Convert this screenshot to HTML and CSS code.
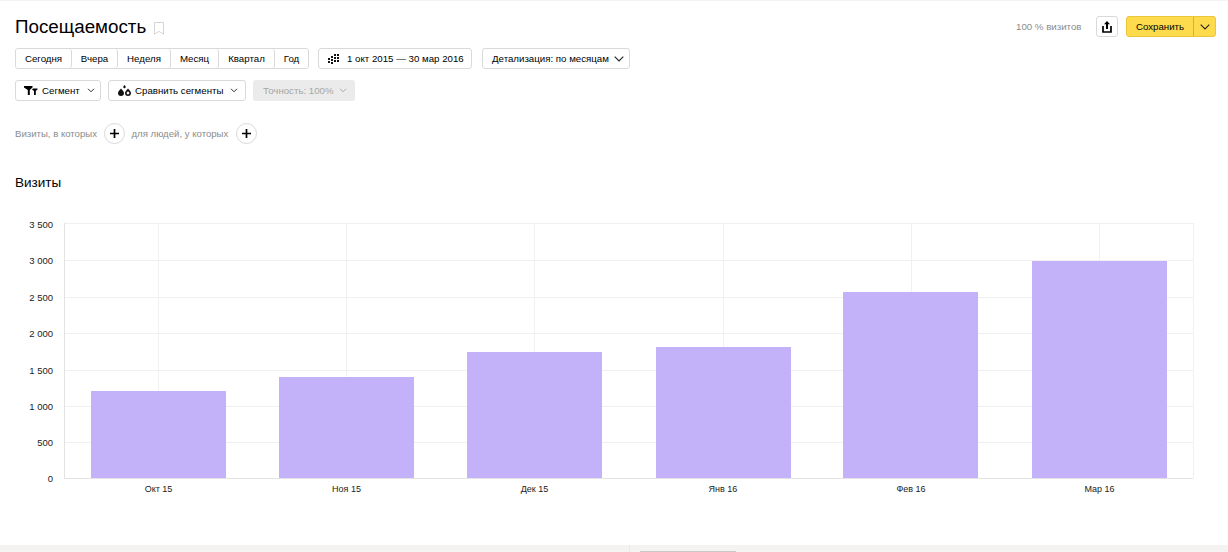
FILE: index.html
```html
<!DOCTYPE html>
<html lang="ru">
<head>
<meta charset="utf-8">
<title>Посещаемость</title>
<link rel="stylesheet" href="styles.css">
</head>
<body>
<div class="page">
  <header class="head">
    <div class="title-wrap">
      <h1 class="title">Посещаемость</h1>
      <svg class="bookmark" width="10" height="13" viewBox="0 0 10 13"><path d="M.5.500h9v11.600L5 9.400.5 12.100z" fill="none" stroke="#d4d4d4"/></svg>
    </div>
    <div class="head-right">
      <span class="sample">100 % визитов</span>
      <button class="btn share" aria-label="Поделиться">
        <svg width="10" height="12" viewBox="0 0 10 12"><path d="M5 0 2 3.200h2v4.800h2V3.200h2z" fill="#000"/><path d="M1 5v6h8V5" fill="none" stroke="#000" stroke-width="1.700"/></svg>
      </button>
      <div class="save">
        <span class="save-main">Сохранить</span>
        <span class="save-arrow"><svg width="10" height="6" viewBox="0 0 10 6"><path d="M.7.700 5 5 9.300.7" fill="none" stroke="#222" stroke-width="1.100"/></svg></span>
      </div>
    </div>
  </header>

  <div class="row row-dates">
    <div class="group">
      <button class="seg seg-1">Сегодня</button>
      <button class="seg seg-2">Вчера</button>
      <button class="seg seg-3">Неделя</button>
      <button class="seg seg-4">Месяц</button>
      <button class="seg seg-5">Квартал</button>
      <button class="seg seg-6">Год</button>
    </div>
    <button class="btn date">
      <svg width="12" height="10" viewBox="0 0 12 10" fill="#111"><path d="M0 4h2v2H0zM0 7h2v2H0zM3 2h2v2H3zM3 5h2v2H3zM3 8h2v2H3zM6 0h2v2H6zM6 3h2v2H6zM6 6h2v2H6zM9 0h2v2H9zM9 3h2v2H9zM9 6h2v2H9z"/></svg>
      <span>1 окт 2015 — 30 мар 2016</span>
    </button>
    <button class="btn detail">
      <span>Детализация: по месяцам</span>
      <svg width="10" height="6" viewBox="0 0 10 6"><path d="M.7.700 5 5 9.300.7" fill="none" stroke="#222" stroke-width="1.100"/></svg>
    </button>
  </div>

  <div class="row row-segments">
    <button class="btn segment">
      <svg width="14" height="9" viewBox="0 0 14 9" fill="#000"><path d="M0 0h8.500v1.500L5.800 4v5H3.800V4L0 1.500zM9 2.500h4.500v1L11.800 5v4H10V5L8 3.500z"/></svg>
      <span>Сегмент</span>
      <svg class="chev" width="8" height="5" viewBox="0 0 8 5"><path d="M1 .800 4 3.800 7 .8" fill="none" stroke="#333"/></svg>
    </button>
    <button class="btn compare">
      <svg width="13" height="11" viewBox="0 0 13 11" fill="#111"><path d="M3 3.500c1.300 1.600 3 3 3 4.500a3 3 0 0 1-6 0c0-1.500 1.700-2.900 3-4.500z"/><path fill-rule="evenodd" d="M10 3.500c1.300 1.600 3 3 3 4.500a3 3 0 0 1-6 0c0-1.500 1.700-2.900 3-4.500zM10 6.200C9.300 7 8.600 7.400 8.600 8.100a1.400 1.400 0 0 0 2.800 0c0-.7-.7-1.100-1.400-1.900z"/><path d="M6.500 0c.6.800 1.200 1.300 1.200 2a1.200 1.200 0 0 1-2.400 0c0-.7.600-1.200 1.200-2z"/></svg>
      <span>Сравнить сегменты</span>
      <svg class="chev" width="8" height="5" viewBox="0 0 8 5"><path d="M1 .800 4 3.800 7 .8" fill="none" stroke="#333"/></svg>
    </button>
    <button class="accuracy">
      <span>Точность: 100%</span>
      <svg class="chev-muted" width="8" height="5" viewBox="0 0 8 5"><path d="M1 .800 4 3.800 7 .8" fill="none" stroke="#aaa"/></svg>
    </button>
  </div>

  <div class="row row-filter">
    <span class="hint">Визиты, в которых</span>
    <button class="plus" aria-label="Добавить"><svg width="9" height="9" viewBox="0 0 9 9"><path d="M4.500 0v9M0 4.500h9" stroke="#000" stroke-width="1.700"/></svg></button>
    <span class="hint">для людей, у которых</span>
    <button class="plus" aria-label="Добавить"><svg width="9" height="9" viewBox="0 0 9 9"><path d="M4.500 0v9M0 4.500h9" stroke="#000" stroke-width="1.700"/></svg></button>
  </div>

  <h2 class="chart-title">Визиты</h2>

  <svg class="chart" width="1228" height="300" viewBox="0 0 1228 300">
    <g class="grid">
      <path d="M64 24.500H1193M64 61.500H1193M64 98.500H1193M64 134.500H1193M64 171.500H1193M64 207.500H1193M64 243.500H1193"/>
      <path d="M158.500 24V279M346.500 24V279M534.500 24V279M723.500 24V279M911.500 24V279M1099.500 24V279M1193.500 24V279"/>
    </g>
    <g class="bars">
      <rect x="91" y="192" width="135" height="87"/>
      <rect x="279" y="178" width="135" height="101"/>
      <rect x="467" y="153" width="135" height="126"/>
      <rect x="656" y="148" width="135" height="131"/>
      <rect x="843" y="93" width="135" height="186"/>
      <rect x="1032" y="62" width="135" height="217"/>
    </g>
    <path class="axis" d="M64.500 24V279.500H1193"/>
    <g class="ylab">
      <text x="53" y="29">3 500</text>
      <text x="53" y="65">3 000</text>
      <text x="53" y="102">2 500</text>
      <text x="53" y="138">2 000</text>
      <text x="53" y="175">1 500</text>
      <text x="53" y="211">1 000</text>
      <text x="53" y="247">500</text>
      <text x="53" y="283">0</text>
    </g>
    <g class="xlab">
      <text x="158.500" y="293">Окт 15</text>
      <text x="346.500" y="293">Ноя 15</text>
      <text x="534.500" y="293">Дек 15</text>
      <text x="723" y="293">Янв 16</text>
      <text x="911" y="293">Фев 16</text>
      <text x="1099.500" y="293">Мар 16</text>
    </g>
  </svg>
</div>
<footer class="foot">
  <div class="foot-left"></div>
  <div class="foot-right"><span class="thumb"></span></div>
</footer>
</body>
</html>
```
FILE: styles.css
```css
* { box-sizing: border-box; }
html, body { margin: 0; height: 100%; }
body {
  width: 1228px;
  height: 552px;
  overflow: hidden;
  background: #fff;
  color: #000;
  font-family: "Liberation Sans", Arial, sans-serif;
  font-size: 9.700px;
  display: flex;
  flex-direction: column;
}
button { font: inherit; color: inherit; padding: 0; margin: 0; cursor: pointer; white-space: nowrap; }
.page { flex: 1; min-height: 0; border-top: 1px solid #f3f3f3; }

.head {
  display: flex;
  justify-content: space-between;
  align-items: flex-start;
  height: 47px;
  padding: 15px 12px 0 15px;
}
.title-wrap { display: flex; align-items: center; gap: 8px; }
.title { margin: 0; font-size: 18.800px; font-weight: 400; line-height: 22px; }
.bookmark { margin-top: 2px; }
.head-right { display: flex; align-items: center; }
.sample { color: #8c8c8c; width: 80px; }
.btn {
  display: inline-flex;
  align-items: center;
  height: 21px;
  background: #fff;
  border: 1px solid #d9d9d9;
  border-radius: 3px;
}
.share { width: 22px; justify-content: center; margin-right: 8px; }
.save {
  display: flex;
  width: 90px;
  height: 21px;
  background: #fedb4d;
  border: 1px solid #ecc53a;
  border-radius: 3px;
}
.save-main { width: 67px; display: flex; align-items: center; justify-content: center; border-right: 1px solid #d9b02e; }
.save-arrow { flex: 1; display: flex; align-items: center; justify-content: center; }

.row { display: flex; align-items: center; padding-left: 15px; }
.row-dates { height: 21px; }
.group { display: flex; height: 21px; border: 1px solid #d9d9d9; border-radius: 3px; margin-right: 9px; }
.seg { background: #fff; border: 0; border-right: 1px solid #d9d9d9; border-radius: 3px; }
.seg-1 { width: 56px; }
.seg-2 { width: 46px; }
.seg-3 { width: 53px; }
.seg-4 { width: 48px; }
.seg-5 { width: 56px; }
.seg-6 { flex: 1; width: 33px; border-right: 0; }
.date { width: 154px; padding-left: 9px; gap: 7px; margin-right: 10px; }
.detail { width: 148px; padding-left: 9px; gap: 5px; }

.row-segments { margin-top: 11px; height: 21px; }
.segment { width: 86px; padding-left: 8px; gap: 4px; margin-right: 7px; }
.compare { width: 138px; padding-left: 9px; gap: 4px; margin-right: 7px; }
.chev { margin-left: 3px; }
.accuracy {
  display: inline-flex;
  align-items: center;
  gap: 5px;
  width: 102px;
  height: 21px;
  padding-left: 10px;
  background: #ebebeb;
  border: 0;
  border-radius: 3px;
  color: #a6a6a6;
}

.row-filter { margin-top: 21px; height: 22px; }
.hint { color: #8c8c8c; font-size: 9.600px; }
.plus {
  display: flex;
  align-items: center;
  justify-content: center;
  width: 21px;
  height: 21px;
  margin: 0 6px 0 7.500px;
  background: #fff;
  border: 1px solid #d9d9d9;
  border-radius: 50%;
}

.chart-title { margin: 31px 0 0 15px; font-size: 13.500px; font-weight: 400; line-height: 16px; }
.chart { display: block; margin-top: 8px; }
.grid path { fill: none; stroke: #f0f0f0; stroke-width: 1; }
.bars rect { fill: #c3b2fa; }
.axis { fill: none; stroke: #e3e3e3; stroke-width: 1; }
.ylab text { font-size: 9.500px; text-anchor: end; fill: #222; }
.xlab text { font-size: 9px; text-anchor: middle; fill: #222; }

.foot { display: flex; height: 7px; background: #f4f3f1; flex: none; }
.foot-left { width: 630px; border-right: 1px solid #e8e8e8; }
.foot-right { flex: 1; padding: 6px 0 0 10px; }
.thumb { display: block; width: 96px; height: 1px; background: #c8c8c8; }
```
